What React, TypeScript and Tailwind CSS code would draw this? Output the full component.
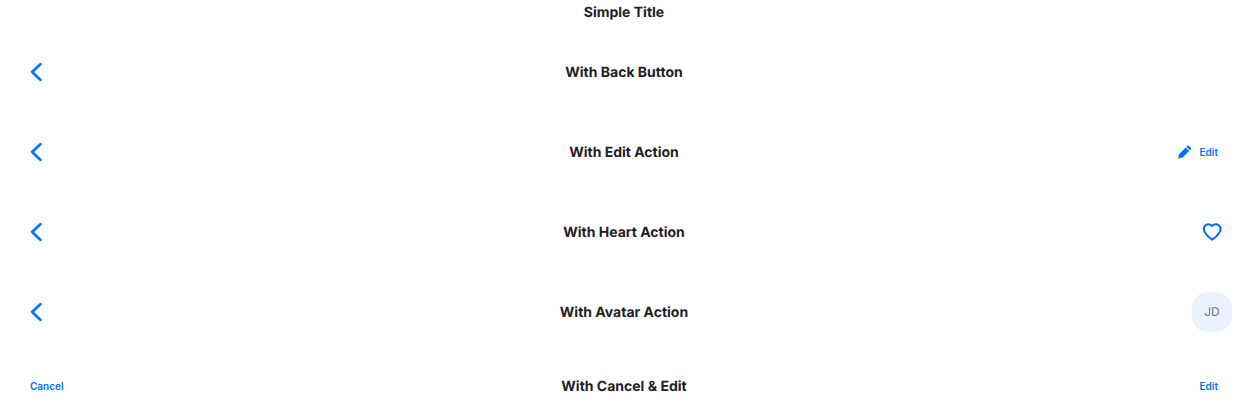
import React from "react";

function Back() {
  return (
    <button aria-label="Back" className="flex size-10 items-center justify-center text-[#006ffd]">
      <svg width="20" height="20" viewBox="0 0 20 20" fill="none" stroke="currentColor" strokeWidth="2.5" strokeLinecap="round">
        <path d="M14.6 2 6.1 10l8.5 8" strokeLinejoin="round" />
      </svg>
    </button>
  );
}

function Bar({ title, left, right, className }: { title: string; left?: React.ReactNode; right?: React.ReactNode; className: string }) {
  return (
    <header className={`grid grid-cols-[1fr_auto_1fr] items-center px-4 ${className}`}>
      <div className="flex justify-start">{left}</div>
      <h1 className="pt-0.5 text-sm font-bold text-[#1f2024]">{title}</h1>
      <div className="flex justify-end">{right}</div>
    </header>
  );
}

function TextButton({ children }: { children: React.ReactNode }) {
  return <button className="flex items-center gap-2 px-3.5 text-[10px] font-semibold text-[#006ffd]">{children}</button>;
}

export default function App() {
  return (
    <main className="flex h-[412px] flex-col gap-4 overflow-hidden bg-white font-['Inter',sans-serif] antialiased [text-rendering:geometricPrecision]">
      <Bar title="Simple Title" className="h-6" />
      <Bar title="With Back Button" className="h-16" left={<Back />} />
      <Bar
        title="With Edit Action"
        className="h-16"
        left={<Back />}
        right={
          <TextButton>
            <svg width="14" height="14" viewBox="0 0 14 14" fill="currentColor">
              <path d="m7.7 2.4 3.5 3.5-6.3 6.3q-.4.4-1 .5l-3.1.7q-.6.1-.5-.5l.7-3.1q.1-.6.5-1ZM8.4 1.7l1-1q.7-.7 1.4 0l2.1 2.1q.7.7 0 1.4l-1 1Z" />
            </svg>
            Edit
          </TextButton>
        }
      />
      <Bar
        title="With Heart Action"
        className="h-16"
        left={<Back />}
        right={
          <button aria-label="Favorite" className="flex size-10 items-center justify-center text-[#006ffd]">
            <svg width="20" height="20" viewBox="0 0 20 20" fill="none" stroke="currentColor" strokeWidth="2" strokeLinejoin="round">
              <path d="M10.2 4C8.5 1.8 5.6 1.7 3.7 3.3C1.7 5 1.5 8 3 10.5C4.7 13.4 7.4 15.8 10.2 17.7C13 15.8 15.7 13.4 17.4 10.5C18.9 8 18.7 5 16.7 3.3C14.8 1.7 11.9 1.8 10.2 4Z" />
            </svg>
          </button>
        }
      />
      <Bar
        title="With Avatar Action"
        className="h-16"
        left={<Back />}
        right={<div className="flex size-10 items-center justify-center rounded-2xl bg-[#eaf2ff] text-xs text-[#71727a]">JD</div>}
      />
      <Bar title="With Cancel &amp; Edit" className="h-[52px]" left={<TextButton>Cancel</TextButton>} right={<TextButton>Edit</TextButton>} />
    </main>
  );
}
